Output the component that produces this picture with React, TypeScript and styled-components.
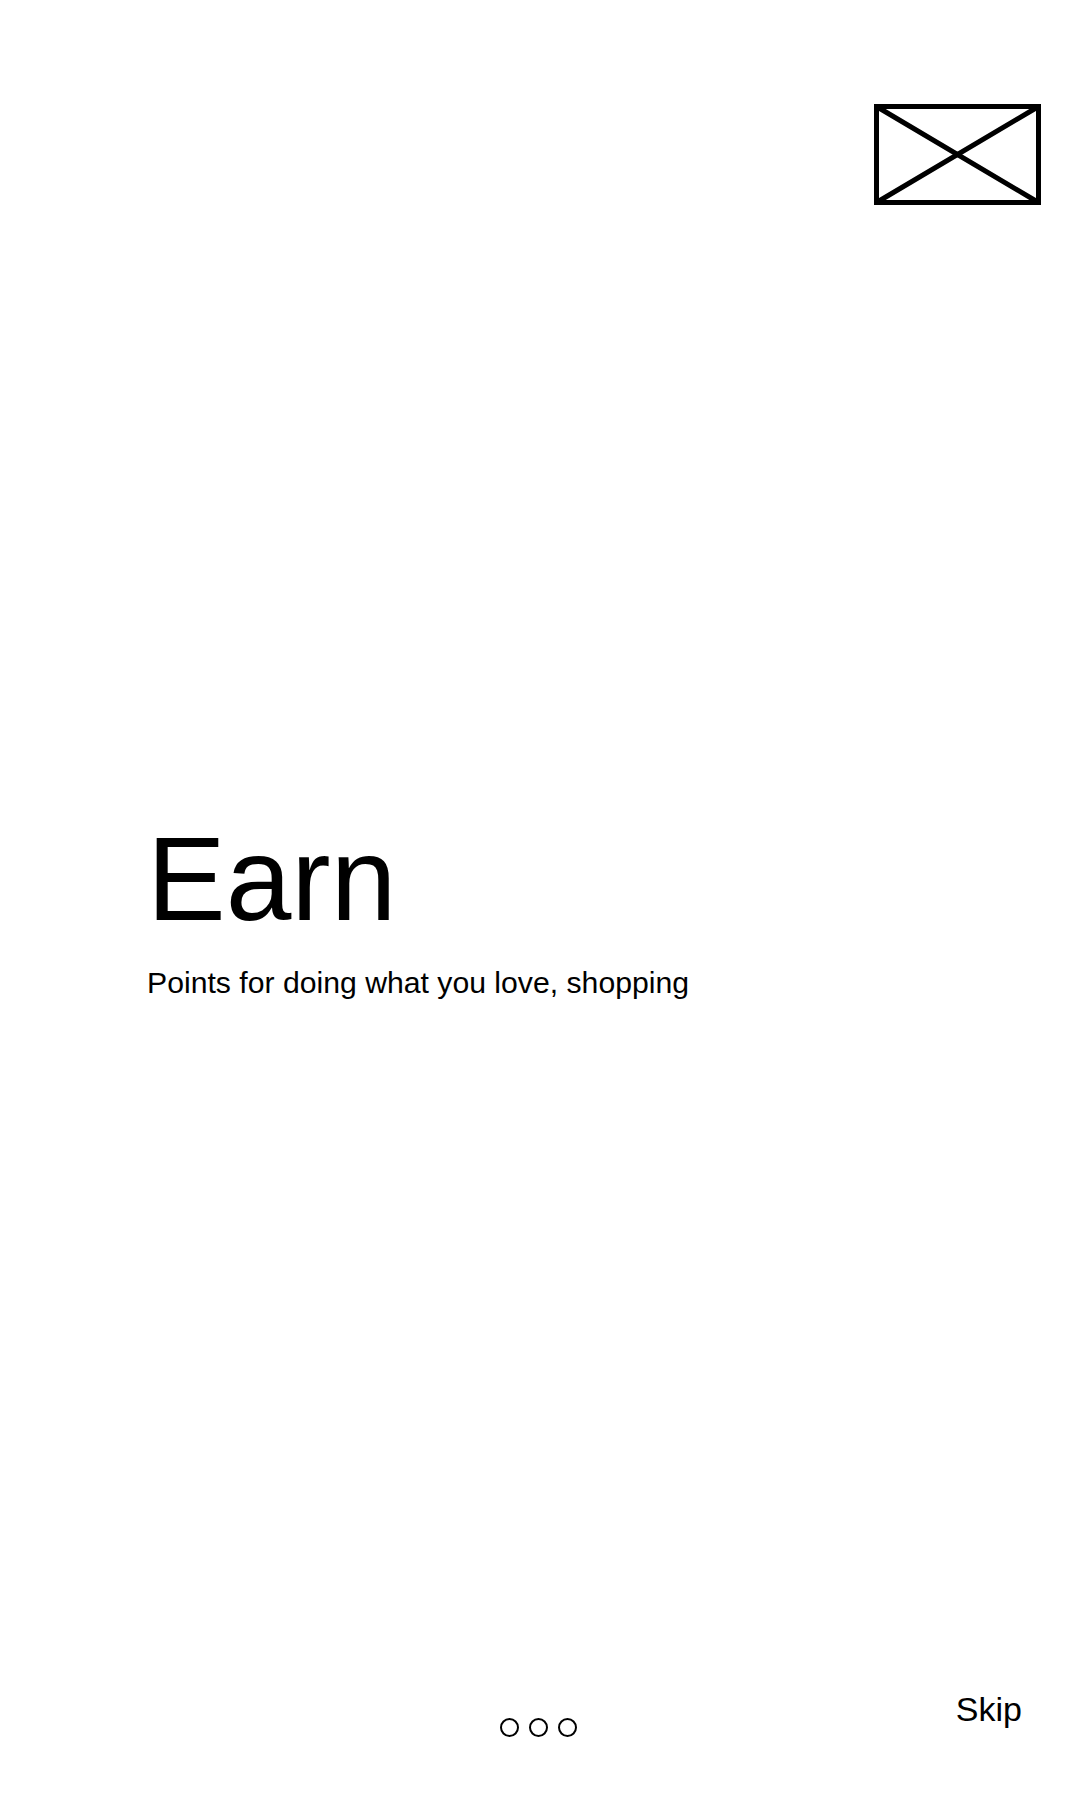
import React from "react";
import styled, { createGlobalStyle } from "styled-components";

const Global = createGlobalStyle`
  html, body { margin: 0; padding: 0; background: #ffffff; }
  body { font-family: "Liberation Sans", Arial, sans-serif; color: #000; }
  * { box-sizing: border-box; }
`;

const Page = styled.div`
  height: 1800px;
  display: flex;
  flex-direction: column;
  background: #fff;
`;

const Header = styled.header`
  display: flex;
  justify-content: flex-end;
  padding: 104px 39px 0 0;
`;

const Placeholder = styled.svg`
  display: block;
  width: 167px;
  height: 101px;
`;

const Main = styled.main`
  flex: 1;
  display: flex;
  flex-direction: column;
  padding: 615px 0 0 147px;
`;

const Title = styled.h1`
  margin: 0;
  font-size: 118px;
  line-height: 1;
  font-weight: 400;
`;

const Subtitle = styled.p`
  margin: 28px 0 0;
  font-size: 30.2px;
  line-height: normal;
`;

const Footer = styled.footer`
  display: grid;
  grid-template-columns: 1fr auto 1fr;
  align-items: start;
  padding: 0 58px 63px 54px;
`;

const Dots = styled.div`
  grid-column: 2;
  display: flex;
  gap: 10px;
  margin-top: 28px;
`;

const Dot = styled.span<{ $active?: boolean }>`
  width: 19px;
  height: 19px;
  border: 2.8px solid #000;
  border-radius: 50%;
  background: ${(p) => (p.$active ? "#000" : "transparent")};
`;

const Skip = styled.button`
  grid-column: 3;
  justify-self: end;
  border: 0;
  background: none;
  padding: 0;
  font-family: "Liberation Sans", Arial, sans-serif;
  font-size: 34px;
  line-height: normal;
  color: #000;
  cursor: pointer;
`;

export default function App() {
  return (
    <>
      <Global />
      <Page>
        <Header>
          <Placeholder viewBox="0 0 167 101">
            <g stroke="#000" strokeWidth="5" fill="none" strokeLinecap="round">
              <rect x="2.5" y="2.5" width="162" height="96" />
              <line x1="2.5" y1="2.5" x2="164.5" y2="98.5" />
              <line x1="164.5" y1="2.5" x2="2.5" y2="98.5" />
            </g>
          </Placeholder>
        </Header>
        <Main>
          <Title>Earn</Title>
          <Subtitle>Points for doing what you love, shopping</Subtitle>
        </Main>
        <Footer>
          <Dots>
            <Dot />
            <Dot />
            <Dot />
          </Dots>
          <Skip>Skip</Skip>
        </Footer>
      </Page>
    </>
  );
}
